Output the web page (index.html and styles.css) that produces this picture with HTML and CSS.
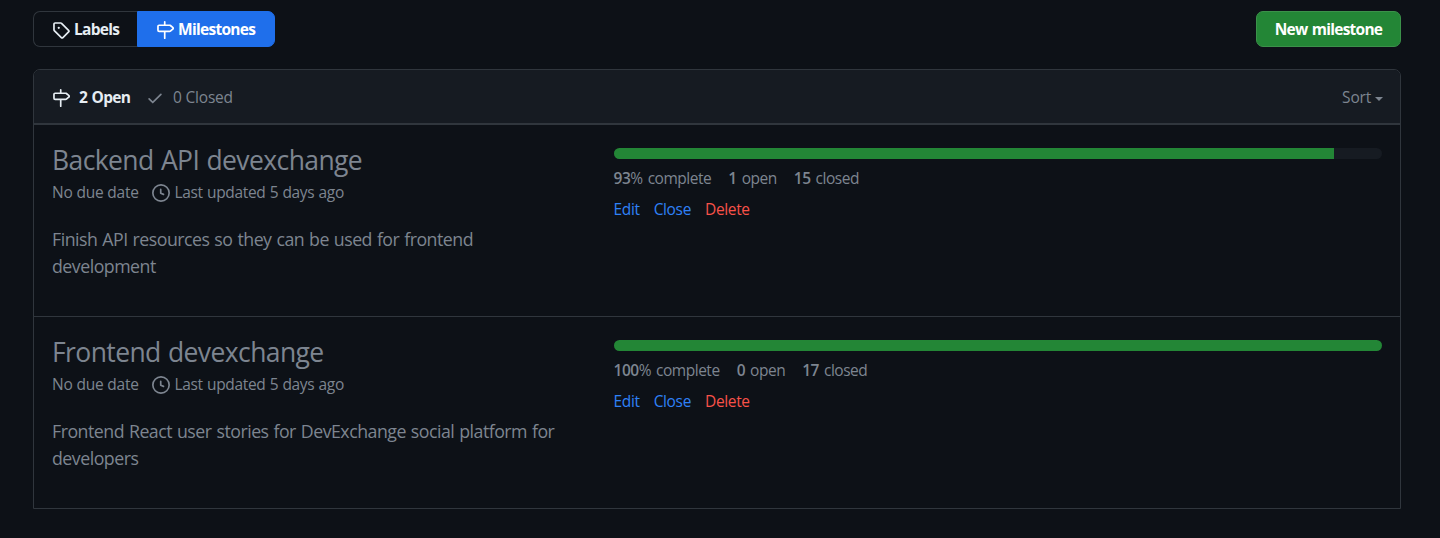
FILE: index.html
```html
<!DOCTYPE html>
<html lang="en">
<head>
<meta charset="utf-8">
<title>Milestones</title>
<link rel="stylesheet" href="styles.css">
</head>
<body>
<svg class="sprite" aria-hidden="true">
  <symbol id="tag" viewBox="0 0 16 16"><path fill-rule="evenodd" d="M2.5 7.775V2.75a.25.25 0 01.25-.25h5.025a.25.25 0 01.177.073l6.25 6.25a.25.25 0 010 .354l-5.025 5.025a.25.25 0 01-.354 0l-6.25-6.25a.25.25 0 01-.073-.177zm-1.5 0V2.75C1 1.784 1.784 1 2.75 1h5.025c.464 0 .91.184 1.238.513l6.25 6.25a1.75 1.75 0 010 2.474l-5.026 5.026a1.75 1.75 0 01-2.474 0l-6.25-6.25A1.75 1.75 0 011 7.775zM6 5a1 1 0 100 2 1 1 0 000-2z"/></symbol>
  <symbol id="milestone" viewBox="0 0 16 16"><path fill-rule="evenodd" d="M7.75 0a.75.75 0 01.75.75V3h3.634c.414 0 .814.147 1.13.414l2.07 1.75a1.75 1.75 0 010 2.672l-2.07 1.75a1.75 1.75 0 01-1.13.414H8.5v5.25a.75.75 0 11-1.5 0V10H2.75A1.75 1.75 0 011 8.25v-3.5C1 3.784 1.784 3 2.75 3H7V.75A.75.75 0 017.75 0zm0 8.5h4.384a.25.25 0 00.161-.06l2.07-1.75a.25.25 0 000-.38l-2.07-1.75a.25.25 0 00-.161-.06H2.75a.25.25 0 00-.25.25v3.5c0 .138.112.25.25.25h5z"/></symbol>
  <symbol id="check" viewBox="0 0 16 16"><path fill-rule="evenodd" d="M13.78 4.22a.75.75 0 010 1.06l-7.25 7.25a.75.75 0 01-1.06 0L2.22 9.28a.75.75 0 011.06-1.06L6 10.94l6.72-6.72a.75.75 0 011.06 0z"/></symbol>
  <symbol id="clock" viewBox="0 0 16 16"><path fill-rule="evenodd" d="M1.5 8a6.5 6.5 0 1113 0 6.5 6.5 0 01-13 0zM8 0a8 8 0 100 16A8 8 0 008 0zm.5 4.75a.75.75 0 00-1.5 0v3.5a.75.75 0 00.471.696l2.5 1a.75.75 0 00.557-1.392L8.5 7.742V4.75z"/></symbol>
</svg>
<main class="page">
  <div class="toolbar">
    <nav class="subnav">
      <a class="tab"><svg class="icon"><use href="#tag"/></svg><span>Labels</span></a>
      <a class="tab selected"><svg class="icon"><use href="#milestone"/></svg><span>Milestones</span></a>
    </nav>
    <button class="new-button"><span>New milestone</span></button>
  </div>
  <section class="box">
    <header class="box-header">
      <a class="state open"><svg class="icon"><use href="#milestone"/></svg><span>2 Open</span></a>
      <a class="state closed"><svg class="icon"><use href="#check"/></svg><span>0 Closed</span></a>
      <a class="sort"><span>Sort</span><i class="caret"></i></a>
    </header>
    <article class="row">
      <div class="info">
        <h2 class="title">Backend API devexchange</h2>
        <div class="meta"><span class="due">No due date</span><svg class="icon"><use href="#clock"/></svg><span class="updated">Last updated 5 days ago</span></div>
        <p class="description">Finish API resources so they can be used for frontend development</p>
      </div>
      <div class="status">
        <div class="progress"><div class="bar" style="width:93.75%"></div></div>
        <div class="stats"><span><b>93</b>% complete</span><span><b>1</b> open</span><span><b>15</b> closed</span></div>
        <div class="actions"><a class="edit">Edit</a><a class="close">Close</a><a class="delete">Delete</a></div>
      </div>
    </article>
    <article class="row">
      <div class="info">
        <h2 class="title">Frontend devexchange</h2>
        <div class="meta"><span class="due">No due date</span><svg class="icon"><use href="#clock"/></svg><span class="updated">Last updated 5 days ago</span></div>
        <p class="description">Frontend React user stories for DevExchange social platform for developers</p>
      </div>
      <div class="status">
        <div class="progress"><div class="bar" style="width:100%"></div></div>
        <div class="stats"><span><b>100</b>% complete</span><span><b>0</b> open</span><span><b>17</b> closed</span></div>
        <div class="actions"><a class="edit">Edit</a><a class="close">Close</a><a class="delete">Delete</a></div>
      </div>
    </article>
  </section>
</main>
</body>
</html>
```
FILE: styles.css
```css
* { box-sizing: border-box; }
body {
  margin: 0;
  background: #0d1117;
  color: #7d8590;
  font: 15.5px/24px "Open Sans", "Noto Sans", sans-serif;
  letter-spacing: -0.2px;
}
.sprite { display: none; }
.icon { width: 18px; height: 18px; margin-top: 2px; fill: currentColor; flex: none; }
.page { padding: 11px 39px 0 33px; }
.toolbar { display: flex; justify-content: space-between; height: 36px; }
.subnav { display: flex; }
.tab {
  display: flex;
  align-items: center;
  gap: 4px;
  width: 104px;
  padding-left: 18px;
  border: 1px solid #30363d;
  border-right: 0;
  border-radius: 7px 0 0 7px;
  color: #e6edf3;
  font-weight: 700;
  letter-spacing: -0.7px;
  white-space: nowrap;
}
.tab.selected {
  width: 138px;
  border: 1px solid #1f6feb;
  border-radius: 0 7px 7px 0;
  background: #1f6feb;
  color: #fff;
}
.new-button {
  width: 145px;
  padding: 0;
  border: 1px solid #3b914a;
  border-radius: 7px;
  background: #238636;
  color: #fff;
  font: inherit;
  font-weight: 700;
  letter-spacing: -0.75px;
  word-spacing: 1px;
  white-space: nowrap;
}
.box {
  margin-top: 22px;
  border: 1px solid #30363d;
  border-radius: 7px 7px 0 0;
}
.box-header {
  display: flex;
  align-items: center;
  height: 55px;
  padding: 1px 17px 0 18px;
  border-bottom: 2px solid #30363d;
  border-radius: 6px 6px 0 0;
  background: #161b22;
}
.state { display: flex; align-items: center; white-space: nowrap; }
.state.open { width: 94px; gap: 9px; color: #e6edf3; font-weight: 700; letter-spacing: -0.7px; word-spacing: 1px; }
.state.closed { gap: 9px; }
.sort { display: flex; align-items: center; gap: 4px; margin-left: auto; }
.caret {
  border: 4px solid transparent;
  border-top-color: currentColor;
  border-bottom: 0;
  margin-top: 3px;
}
.row { display: flex; height: 191px; padding: 18px 18px 0; }
.row + .row { height: 192px; border-top: 1px solid #30363d; }
.info { width: 561.5px; }
.title { margin: 0; font-size: 26.5px; font-weight: 400; line-height: 34px; letter-spacing: -0.6px; word-spacing: 1px; }
.meta { display: flex; align-items: center; height: 27px; margin-top: 1.5px; }
.meta .icon { margin-top: 1px; }
.due { width: 100px; }
.updated { margin-left: 4.5px; letter-spacing: -0.33px; word-spacing: 0.5px; }
.description { margin: 20px 0 0; width: 510px; font-size: 17.75px; line-height: 27px; letter-spacing: -0.5px; word-spacing: 0.8px; }
.status { flex: 1; padding-top: 5px; }
.progress { height: 11px; overflow: hidden; border-radius: 6px; background: #161b22; }
.bar { height: 100%; background: #238636; }
.stats { display: flex; gap: 17px; margin-top: 7px; letter-spacing: -0.48px; word-spacing: 1.5px; }
.stats b { font-weight: 600; }
.actions { display: flex; gap: 14px; margin-top: 7px; color: #2f81f7; letter-spacing: -0.35px; }
.delete { color: #f85149; }
```
